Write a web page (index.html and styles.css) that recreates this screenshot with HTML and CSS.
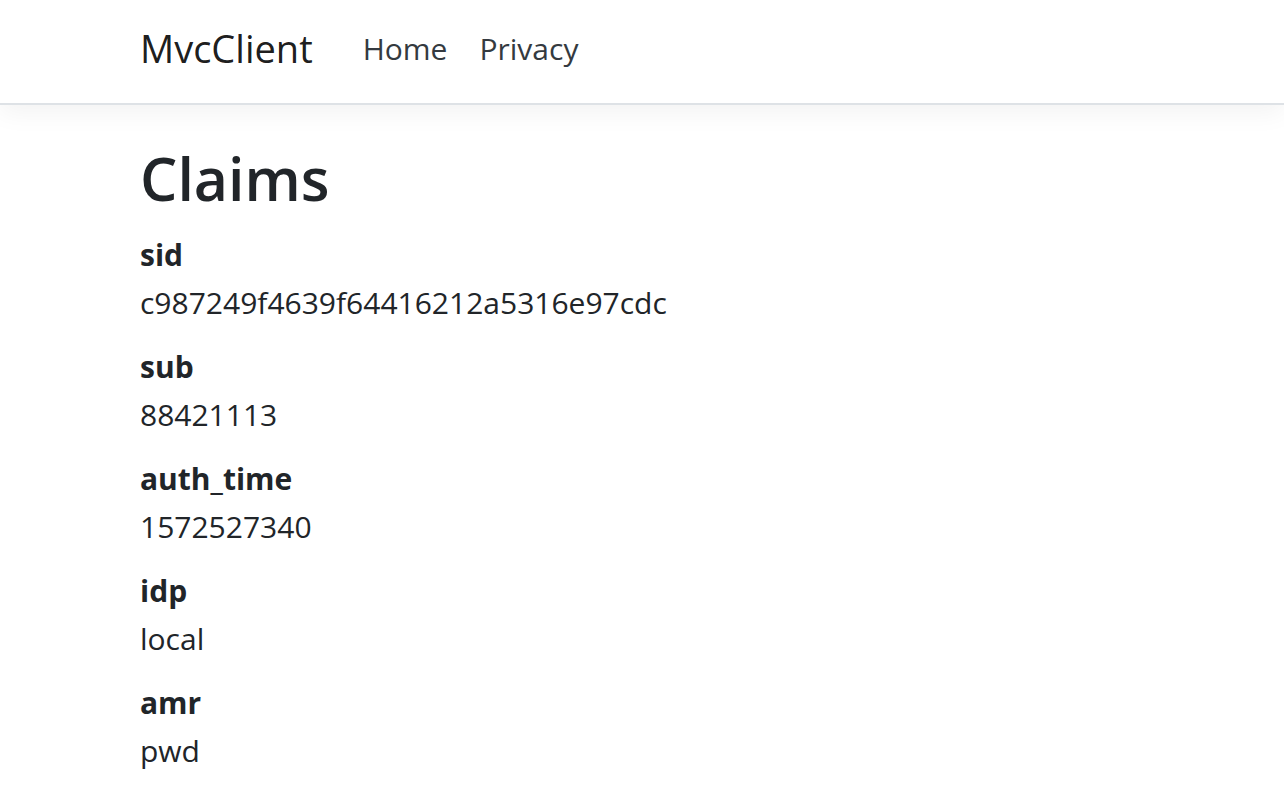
FILE: index.html
```html
<!DOCTYPE html>
<html lang="en">
<head>
<meta charset="utf-8">
<title>Claims - MvcClient</title>
<link rel="stylesheet" href="styles.css">
</head>
<body>
<header class="navbar">
  <div class="container nav-inner">
    <a class="brand" href="#">MvcClient</a>
    <ul class="nav-links">
      <li><a class="nav-link" href="#">Home</a></li>
      <li><a class="nav-link" href="#">Privacy</a></li>
    </ul>
  </div>
</header>
<main class="container content">
  <h2 class="title">Claims</h2>
  <dl class="claims">
    <dt>sid</dt>
    <dd>c987249f4639f64416212a5316e97cdc</dd>
    <dt>sub</dt>
    <dd>88421113</dd>
    <dt>auth_time</dt>
    <dd>1572527340</dd>
    <dt>idp</dt>
    <dd>local</dd>
    <dt>amr</dt>
    <dd>pwd</dd>
  </dl>
</main>
</body>
</html>
```
FILE: styles.css
```css
html, body {
  margin: 0;
  padding: 0;
  background: #fff;
}
body {
  font-family: "Open Sans", "Noto Sans", sans-serif;
  color: #212529;
  font-size: 32px;
  line-height: 48px;
}
.container {
  padding-left: 140px;
  padding-right: 140px;
}
.navbar {
  height: 103px;
  border-bottom: 2px solid #dee2e6;
  box-shadow: 0 8px 24px rgba(0, 0, 0, 0.05);
  background: #fff;
  position: relative;
}
.nav-inner {
  display: flex;
  align-items: center;
  height: 100%;
  box-sizing: border-box;
  padding-bottom: 7px;
}
.brand {
  font-size: 38px;
  color: rgba(0, 0, 0, 0.9);
  text-decoration: none;
  margin-right: 50px;
  line-height: 56px;
}
.nav-links {
  display: flex;
  list-style: none;
  margin: 0;
  padding: 0;
  gap: 32px;
}
.nav-link {
  color: #343a40;
  text-decoration: none;
  font-size: 30px;
  line-height: 48px;
}
.content {
  padding-top: 35px;
}
.title {
  font-size: 59px;
  font-weight: 600;
  line-height: 76px;
  margin: 0 0 15px;
}
.claims {
  margin: 0;
}
.claims dt {
  font-weight: 700;
  font-size: 30px;
}
.claims dd {
  margin: 0 0 16px;
  font-size: 30px;
}
```
